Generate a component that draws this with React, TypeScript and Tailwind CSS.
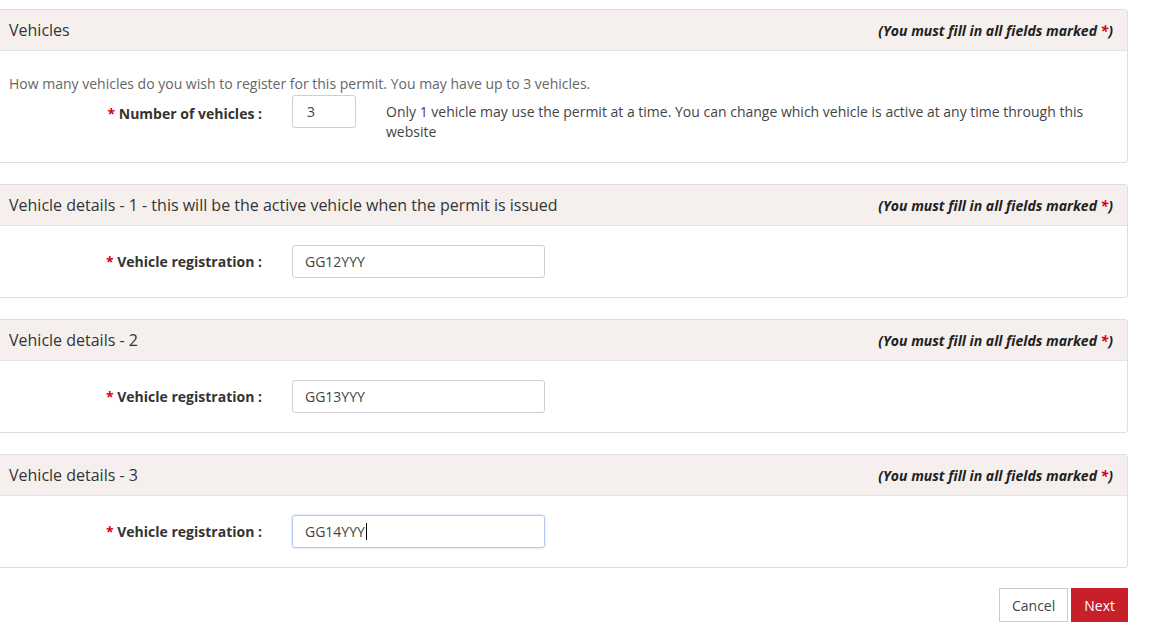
import React from "react";

const Header = ({ title }: { title: string }) => (
  <div className="flex items-center justify-between h-[41px] bg-[#f5f0ee] border-b border-[#e3e3e3] pl-[9px] pr-[14px]">
    <span className="text-[16px] text-[#333]">{title}</span>
    <span className="text-[14px] italic font-bold text-[#222]">
      (You must fill in all fields marked <span className="text-[#d0021b]">*</span>)
    </span>
  </div>
);

const Label = ({ text }: { text: string }) => (
  <div className="w-[263px] text-right pr-[1px] text-[14px] font-bold text-[#333] shrink-0">
    <span className="text-[#d0021b]">*</span> {text} :
  </div>
);

const RegPanel = ({ title, value, focus }: { title: string; value: string; focus?: boolean }) => (
  <div className="mt-[21px] border border-[#dedede] rounded-r-[3px] -ml-[1px] w-[1129px] bg-white">
    <Header title={title} />
    <div className="flex items-center h-[71px]">
      <Label text="Vehicle registration" />
      <div
        className={`ml-[29px] w-[253px] h-[33px] rounded-[3px] border flex items-center px-[12px] text-[14px] text-[#444] ${
          focus ? "border-[#b9c6f0] shadow-[0_0_3px_#c8d2f5]" : "border-[#cfcfcf]"
        }`}
      >
        {value}
        {focus && <span className="w-[1px] h-[17px] bg-black ml-[1px]" />}
      </div>
    </div>
  </div>
);

export default function App() {
  return (
    <div className="w-[1170px] h-[638px] bg-white overflow-hidden pt-[9px]" style={{ fontFamily: '"Open Sans", sans-serif' }}>
      <div className="border border-[#dedede] rounded-r-[3px] -ml-[1px] w-[1129px]">
        <Header title="Vehicles" />
        <div className="pt-[22px] pb-[20px]">
          <div className="pl-[9px] text-[14px] text-[#666]">
            How many vehicles do you wish to register for this permit. You may have up to 3 vehicles.
          </div>
          <div className="flex items-start mt-[9px]">
            <Label text="Number of vehicles" />
            <div className="ml-[29px] w-[64px] h-[33px] rounded-[3px] border border-[#cfcfcf] flex items-center px-[14px] text-[14px] text-[#444] shrink-0 -mt-[8px]">
              3
            </div>
            <div className="ml-[30px] text-[14px] text-[#444] leading-[20px] w-[720px] -mt-[1px]">
              Only 1 vehicle may use the permit at a time. You can change which vehicle is active at any time through this website
            </div>
          </div>
        </div>
      </div>
      <RegPanel title="Vehicle details - 1 - this will be the active vehicle when the permit is issued" value="GG12YYY" />
      <RegPanel title="Vehicle details - 2" value="GG13YYY" />
      <RegPanel title="Vehicle details - 3" value="GG14YYY" focus />
      <div className="flex justify-end w-[1128px] mt-[20px] gap-[3px]">
        <div className="h-[34px] px-[12px] border border-[#ccc] flex items-center text-[14px] text-[#444]">Cancel</div>
        <div className="h-[34px] px-[13px] bg-[#c8202a] flex items-center text-[14px] text-white">Next</div>
      </div>
    </div>
  );
}
